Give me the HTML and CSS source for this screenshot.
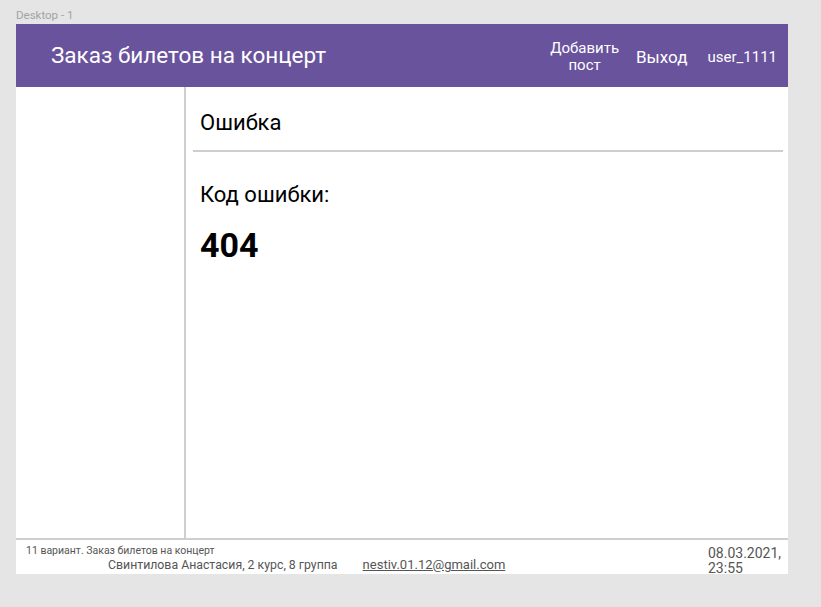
FILE: index.html
```html
<!DOCTYPE html>
<html lang="ru">
<head>
<meta charset="utf-8">
<title>Ошибка</title>
<link rel="stylesheet" href="styles.css">
</head>
<body>
<div class="label">Desktop - 1</div>
<div class="frame">
  <header class="header">
    <div class="title">Заказ билетов на концерт</div>
    <nav class="nav">
      <a class="nav-add">Добавить<br>пост</a>
      <a class="nav-exit">Выход</a>
      <a class="nav-user">user_1111</a>
    </nav>
  </header>
  <div class="main">
    <aside class="sidebar"></aside>
    <section class="content">
      <h1 class="page-title">Ошибка</h1>
      <div class="divider"></div>
      <div class="code-label">Код ошибки:</div>
      <div class="code">404</div>
    </section>
  </div>
  <footer class="footer">
    <div class="footer-left">
      <div class="variant">11 вариант. Заказ билетов на концерт</div>
      <div class="author">
        <span>Свинтилова Анастасия, 2 курс, 8 группа</span>
        <a class="email">nestiv.01.12@gmail.com</a>
      </div>
    </div>
    <div class="date">08.03.2021,<br>23:55</div>
  </footer>
</div>
</body>
</html>
```
FILE: styles.css
```css
html, body {
  margin: 0;
  padding: 0;
}
body {
  background: #e5e5e5;
  font-family: Roboto, "Liberation Sans", sans-serif;
  width: 821px;
  height: 607px;
  overflow: hidden;
}
.label {
  height: 24px;
  box-sizing: border-box;
  padding: 9px 0 0 16px;
  font-size: 11.5px;
  line-height: 13px;
  color: #a3a3a3;
}
.frame {
  margin-left: 16px;
  width: 772px;
  background: #ffffff;
}
.header {
  height: 63px;
  background: #69539d;
  display: flex;
  align-items: center;
  justify-content: space-between;
  padding: 0 11px 0 35px;
  color: #ffffff;
}
.title {
  font-size: 22.5px;
  line-height: 26px;
  margin-top: -1px;
}
.nav {
  display: flex;
  align-items: center;
}
.nav a {
  color: #ffffff;
  text-decoration: none;
}
.nav-add {
  font-size: 15px;
  line-height: 17px;
  text-align: center;
  margin-top: 2px;
}
.nav-exit {
  font-size: 17px;
  margin-left: 17px;
  margin-top: 3px;
}
.nav-user {
  font-size: 15px;
  margin-left: 20px;
  margin-top: 3px;
}
.main {
  display: flex;
  height: 451px;
  border-bottom: 2px solid #cfcfcf;
}
.sidebar {
  width: 168px;
  border-right: 2px solid #cfcfcf;
}
.content {
  flex: 1;
  padding: 0 5px 0 7px;
}
.page-title {
  margin: 0;
  font-weight: 400;
  font-size: 22px;
  line-height: 26px;
  padding: 23px 0 0 7px;
  height: 63px;
  box-sizing: border-box;
  color: #000;
}
.divider {
  height: 2px;
  background: #cfcfcf;
}
.code-label {
  font-size: 22px;
  line-height: 26px;
  padding: 30px 0 0 7px;
  color: #000;
}
.code {
  font-size: 34px;
  font-weight: 700;
  line-height: 40px;
  padding: 17px 0 0 7px;
  color: #000;
}
.footer {
  height: 34px;
  display: flex;
  justify-content: space-between;
  color: #555555;
}
.footer-left {
  padding: 5px 0 0 10px;
}
.variant {
  font-size: 10.5px;
  line-height: 12px;
}
.author {
  font-size: 12.3px;
  line-height: 14px;
  padding-left: 82px;
  margin-top: 1px;
}
.email {
  font-size: 13px;
  margin-left: 22px;
  color: #555555;
  text-decoration: underline;
}
.date {
  width: 80px;
  font-size: 14px;
  line-height: 15px;
  padding-top: 6px;
}
```
